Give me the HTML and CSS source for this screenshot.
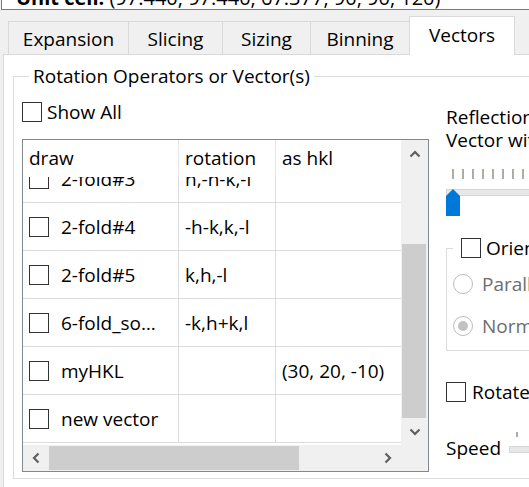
FILE: index.html
```html
<!DOCTYPE html>
<html>
<head>
<meta charset="utf-8">
<link rel="stylesheet" href="styles.css">
</head>
<body>
<div class="unitcell"><b>Unit cell:</b> (97.440, 97.440, 67.377, 90, 90, 120)</div>
<div class="tabs">
  <div class="tab t1">Expansion</div>
  <div class="tab t2">Slicing</div>
  <div class="tab t3">Sizing</div>
  <div class="tab t4">Binning</div>
  <div class="tab t5 active">Vectors</div>
</div>
<div class="pane">
  <fieldset class="group rot">
    <legend>Rotation Operators or Vector(s)</legend>
    <div class="rotbody">
      <div class="left">
        <div class="chk showall"><span class="box"></span><span>Show All</span></div>
        <div class="table">
          <div class="tmain">
            <div class="thead">
              <div class="c c1">draw</div>
              <div class="c c2">rotation</div>
              <div class="c c3">as hkl</div>
            </div>
            <div class="tbody">
              <div class="rows">
                <div class="row"><div class="c c1"><span class="box"></span>2-fold#3</div><div class="c c2">h,-h-k,-l</div><div class="c c3"></div></div>
                <div class="row"><div class="c c1"><span class="box"></span>2-fold#4</div><div class="c c2">-h-k,k,-l</div><div class="c c3"></div></div>
                <div class="row"><div class="c c1"><span class="box"></span>2-fold#5</div><div class="c c2">k,h,-l</div><div class="c c3"></div></div>
                <div class="row"><div class="c c1"><span class="box"></span>6-fold_so…</div><div class="c c2">-k,h+k,l</div><div class="c c3"></div></div>
                <div class="row"><div class="c c1"><span class="box"></span>myHKL</div><div class="c c2"></div><div class="c c3">(30, 20, -10)</div></div>
                <div class="row"><div class="c c1"><span class="box"></span>new vector</div><div class="c c2"></div><div class="c c3"></div></div>
              </div>
            </div>
          </div>
          <div class="vscroll">
            <div class="sbtn vbtn"><svg width="12" height="8" viewBox="0 0 12 8"><polyline points="1.5,6.5 6,2 10.5,6.5" fill="none" stroke="#606060" stroke-width="2.2"/></svg></div>
            <div class="vthumb"></div>
            <div class="vrest"></div>
            <div class="sbtn vbtn"><svg width="12" height="8" viewBox="0 0 12 8"><polyline points="1.5,1.5 6,6 10.5,1.5" fill="none" stroke="#606060" stroke-width="2.2"/></svg></div>
          </div>
          <div class="hscroll">
            <div class="sbtn hbtn"><svg width="8" height="12" viewBox="0 0 8 12"><polyline points="6.5,1.5 2,6 6.5,10.5" fill="none" stroke="#606060" stroke-width="2.2"/></svg></div>
            <div class="hthumb"></div>
            <div class="hrest"></div>
            <div class="sbtn hbtn"><svg width="8" height="12" viewBox="0 0 8 12"><polyline points="1.5,1.5 6,6 1.5,10.5" fill="none" stroke="#606060" stroke-width="2.2"/></svg></div>
          </div>
          <div class="corner"></div>
        </div>
      </div>
      <div class="right">
        <div class="reflect">Reflection plane<br>Vector with hkl</div>
        <div class="ticks"></div>
        <div class="slider">
          <div class="groove"></div>
          <svg class="handle" width="14" height="27" viewBox="0 0 14 27"><polygon points="0,7 7,0 14,7 14,27 0,27" fill="#0078d7"/></svg>
        </div>
        <fieldset class="group orient">
          <legend><span class="box"></span><span>Orientation</span></legend>
          <div class="radio r1"><span class="circ"></span><span>Parallel</span></div>
          <div class="radio r2"><span class="circ on"></span><span>Normal</span></div>
        </fieldset>
        <div class="chk rotate"><span class="box"></span><span>Rotate</span></div>
        <div class="speed">
          <span class="slabel">Speed</span>
          <div class="sslider">
            <div class="sticks"></div>
            <div class="sgroove"></div>
          </div>
        </div>
      </div>
    </div>
  </fieldset>
</div>
</body>
</html>
```

FILE: styles.css
```css
* { box-sizing: border-box; }

body {
  margin: 0;
  width: 529px;
  height: 487px;
  overflow: hidden;
  background: #f0f0f0;
  font-family: "Open Sans", "Noto Sans", sans-serif;
  font-size: 19px;
  color: #000;
}

.unitcell {
  margin: -21px 0 0 1px;
  width: 600px;
  height: 31px;
  padding: 7px 0 0 14px;
  line-height: 24px;
  font-size: 20px;
  white-space: nowrap;
  background: #fff;
  border-left: 1px solid #7a7a7a;
  border-bottom: 1px solid #7a7a7a;
}

.tabs {
  display: flex;
  align-items: flex-end;
  height: 44px;
  padding-left: 8px;
}

.tab {
  height: 33px;
  padding-top: 5px;
  line-height: 25px;
  text-align: center;
  white-space: nowrap;
  background: #f0f0f0;
  border-top: 1px solid #d9d9d9;
  border-left: 1px solid #d9d9d9;
}
.t1 { width: 120px; }
.t2 { width: 94px; }
.t3 { width: 88px; }
.t4 { width: 99px; }
.t5 { width: 106px; }

.tab.active {
  height: 39px;
  padding-top: 6px;
  margin-bottom: -1px;
  background: #fff;
  border-right: 1px solid #d9d9d9;
  position: relative;
  z-index: 1;
}

.pane {
  margin-left: 3px;
  width: 700px;
  height: 600px;
  background: #fff;
  border: 1px solid #d9d9d9;
  padding-left: 9px;
}

.group {
  margin: 0;
  padding: 0;
  border: 1px solid #dcdcdc;
  min-width: 0;
}

.rot {
  margin-top: 9px;
  width: 640px;
  height: 415px;
  padding-left: 8px;
}
.rot > legend {
  margin-left: 7px;
  padding: 0 4px;
  line-height: 24px;
  white-space: nowrap;
}

.rotbody {
  display: flex;
  align-items: flex-start;
}

.box {
  flex: none;
  display: inline-block;
  width: 20px;
  height: 20px;
  background: #fff;
  border: 1px solid #333;
}

.chk {
  display: flex;
  align-items: center;
  height: 24px;
  white-space: nowrap;
}
.chk .box { margin-right: 5px; }
.showall { margin-top: 12px; }

.table {
  margin-top: 15px;
  width: 407px;
  height: 333px;
  border: 1px solid #828790;
  display: grid;
  grid-template-columns: 378px 27px;
  grid-template-rows: 305px 26px;
}

.tmain {
  overflow: hidden;
  background: #fff;
  display: flex;
  flex-direction: column;
}

.thead {
  flex: none;
  height: 37px;
  display: flex;
}
.thead .c {
  line-height: 37px;
  padding-left: 6px;
}
.thead .c1, .thead .c2 { border-right: 1px solid #e5e5e5; }

.c1 { width: 156px; flex: none; }
.c2 { width: 97px; flex: none; }
.c3 { flex: 1; }

.tbody {
  flex: 1;
  overflow: hidden;
}
.rows { margin-top: -22px; }

.row {
  display: flex;
  height: 48px;
  border-bottom: 1px solid #dcdcdc;
}
.row .c {
  display: flex;
  align-items: center;
  padding-left: 6px;
  white-space: nowrap;
}
.row .c1, .row .c2 { border-right: 1px solid #dcdcdc; }
.row .box { margin-right: 12px; }

.vscroll {
  background: #f0f0f0;
  display: flex;
  flex-direction: column;
}
.sbtn {
  flex: none;
  display: flex;
  align-items: center;
  justify-content: center;
}
.vbtn { height: 27px; }
.vthumb {
  flex: none;
  margin: 77px 0 0 1px;
  width: 24px;
  height: 174px;
  background: #cdcdcd;
}
.vrest { flex: 1; }

.hscroll {
  background: #f0f0f0;
  display: flex;
}
.hbtn { width: 26px; }
.hthumb {
  flex: none;
  margin: 1px 0;
  width: 250px;
  background: #cdcdcd;
}
.hrest { flex: 1; }
.corner { background: #f0f0f0; }

.right {
  margin-left: 17px;
  width: 200px;
  padding-top: 18px;
  white-space: nowrap;
}

.reflect { line-height: 23px; }

.ticks {
  margin-top: 17px;
  height: 10px;
  background: repeating-linear-gradient(90deg, transparent 0 6px, #aeaca4 6px 8px, transparent 8px 10px);
}

.slider {
  position: relative;
  margin-top: 10px;
  height: 27px;
}
.groove {
  margin-top: 9px;
  height: 7px;
  background: #e7e7e7;
  border: 1px solid #d6d6d6;
}
.handle {
  position: absolute;
  left: 0;
  top: 0;
}

.orient {
  margin-top: 20px;
  width: 200px;
  padding: 0 0 12px 6px;
}
.orient legend {
  display: flex;
  align-items: center;
  height: 24px;
  padding: 0 0 0 8px;
  line-height: 24px;
}
.orient legend .box { margin-right: 5px; }

.radio {
  display: flex;
  align-items: center;
  height: 24px;
  color: #6d6d6d;
}
.r1 { margin-top: 12px; }
.r2 { margin-top: 18px; }
.circ {
  flex: none;
  width: 20px;
  height: 20px;
  margin-right: 9px;
  border-radius: 50%;
  border: 1px solid #bcbcbc;
  background: #fff;
  display: flex;
  align-items: center;
  justify-content: center;
}
.circ.on::after {
  content: "";
  width: 10px;
  height: 10px;
  border-radius: 50%;
  background: #c2c2c2;
}

.rotate { margin-top: 29px; }
.rotate .box { margin-right: 6px; }

.speed {
  margin-top: 32px;
  display: flex;
  align-items: flex-start;
  height: 24px;
  line-height: 24px;
}
.slabel { width: 63px; flex: none; }
.sslider {
  flex: 1;
  margin-top: -4px;
}
.sticks {
  height: 5px;
  background: repeating-linear-gradient(90deg, transparent 0 7px, #aeaca4 7px 9px, transparent 9px 15px);
}
.sgroove {
  margin-top: 9px;
  height: 7px;
  background: #e7e7e7;
  border: 1px solid #d6d6d6;
}
```
